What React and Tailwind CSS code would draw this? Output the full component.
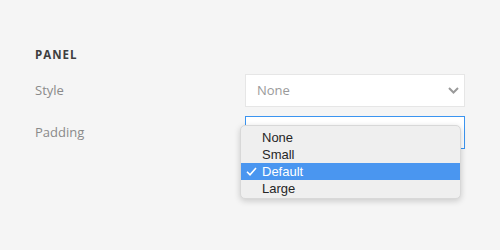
import React from "react";

const options = ["None", "Small", "Default", "Large"];

const Chevron = () => (
  <svg width="11" height="7" viewBox="0 0 11 7" fill="none">
    <path d="M1 1l4.5 4.5L10 1" stroke="#9a9a9a" strokeWidth="2" />
  </svg>
);

const Check = () => (
  <svg width="11" height="9" viewBox="0 0 11 9" fill="none">
    <path d="M1 4.8l3 3L10 1" stroke="white" strokeWidth="1.6" />
  </svg>
);

export default function App() {
  return (
    <div
      className="w-[500px] h-[250px] bg-[#f5f5f5] pt-[47px] pl-[35px]"
      style={{ fontFamily: '"Open Sans", sans-serif' }}
    >
      <h3 className="text-[11.5px] font-bold tracking-[0.09em] leading-4 text-[#3f3f3f]">PANEL</h3>

      {/* Style */}
      <div className="mt-[11px] flex items-center h-[33px]">
        <label className="w-[210px] text-[13px] text-[#8a8a8a]">Style</label>
        <div className="w-[220px] h-[33px] bg-white border border-[#e6e6e6] flex items-center justify-between pl-[11px] pr-[5px]">
          <span className="text-[13px] text-[#9a9a9a]">None</span>
          <Chevron />
        </div>
      </div>

      {/* Padding */}
      <div className="mt-[9px] flex items-center h-[33px]">
        <label className="w-[210px] text-[13px] text-[#8a8a8a]">Padding</label>
        <div className="relative w-[220px] h-[33px] bg-white border border-[#3b94f0]">
          <div
            className="absolute left-[-6px] top-[8px] w-[221px] h-[74px] bg-[#efefef] rounded-[5px] border border-[#d8d8d8] shadow-[0_2px_6px_rgba(0,0,0,0.18)] pt-[3px]"
            style={{ fontFamily: '"Liberation Sans", Arial, sans-serif' }}
          >
            {options.map((o) => {
              const active = o === "Default";
              return (
                <div
                  key={o}
                  className={
                    active
                      ? "relative h-[17px] leading-[17px] pl-[21px] text-[13px] bg-[#4a96f0] text-white"
                      : "relative h-[17px] leading-[17px] pl-[21px] text-[13px] text-[#262626]"
                  }
                >
                  {active && (
                    <span className="absolute left-[5px] top-[4px] flex">
                      <Check />
                    </span>
                  )}
                  {o}
                </div>
              );
            })}
          </div>
        </div>
      </div>
    </div>
  );
}
